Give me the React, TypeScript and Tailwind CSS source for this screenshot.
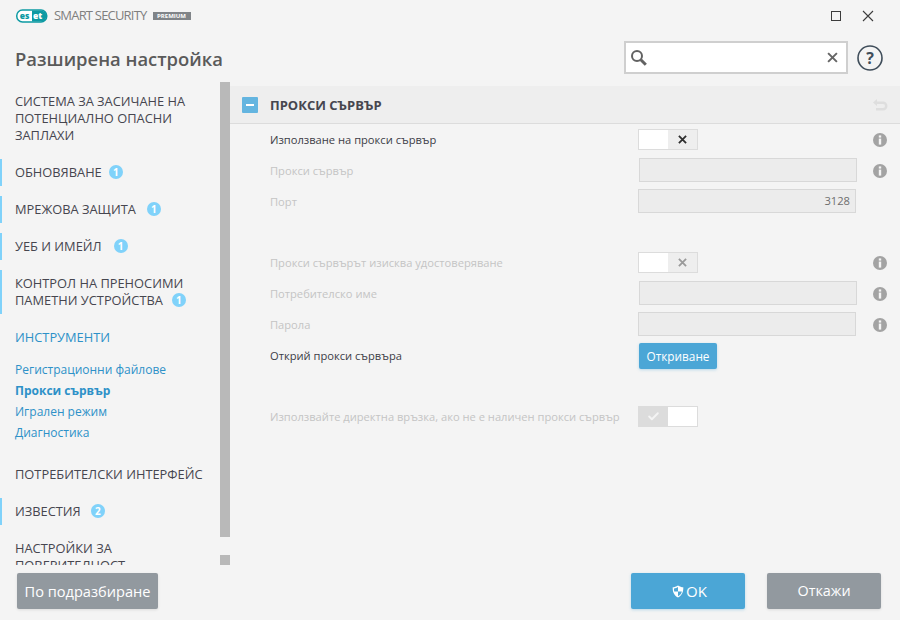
import React from "react";
import { Check } from "lucide-react";

const font = { fontFamily: '"Open Sans", "Noto Sans", sans-serif' };

function Nav({ children, badge, bar = true, gap = "ml-[12px]" }: { children: React.ReactNode; badge?: string; bar?: boolean; gap?: string }) {
  return (
    <div className={`pl-[13px] py-[5px] leading-[17px] text-[12.85px] text-[#46464f] border-l-2 mb-[10px] ${bar ? "border-[#80d2fa]" : "border-transparent"}`}>
      {children}
      {badge && (
        <span className={`inline-flex align-[1px] ${gap} w-[14px] h-[14px] rounded-full bg-[#80d2fa] text-white text-[10px] font-bold leading-none items-center justify-center`}>
          {badge}
        </span>
      )}
    </div>
  );
}

function Info() {
  return (
    <svg width="14" height="14" viewBox="0 0 14 14" className="shrink-0">
      <circle cx="7" cy="7" r="7" fill="#a3a3a3" />
      <rect x="5.8" y="2.4" width="2.4" height="2.2" fill="#f4f4f4" />
      <rect x="5.8" y="5.6" width="2.4" height="6" fill="#f4f4f4" />
    </svg>
  );
}

function Cross({ color, size = 9, width = 2 }: { color: string; size?: number; width?: number }) {
  return (
    <svg width={size} height={size} viewBox="0 0 10 10">
      <path d="M1 1l8 8M9 1L1 9" stroke={color} strokeWidth={width} fill="none" />
    </svg>
  );
}

function Row({ label, dim, info, children }: { label: string; dim?: boolean; info?: boolean; children?: React.ReactNode }) {
  return (
    <div className="h-[31px] flex items-center">
      <div className={`w-[408px] pl-[40px] pt-[2px] text-[11.15px] whitespace-nowrap ${dim ? "text-[#c4c4c4]" : "text-[#3c3c46]"}`}>{label}</div>
      <div className="w-[234px] flex">{children}</div>
      <div className="ml-[1px] w-[14px]">{info && <Info />}</div>
    </div>
  );
}

function Toggle({ dim }: { dim?: boolean }) {
  return (
    <div className="w-[60px] h-[21px] border border-[#dcdcdc] flex bg-[#eeeeee]">
      <div className="w-[29px] bg-white" />
      <div className="flex-1 flex items-center justify-center">
        <Cross color={dim ? "#9a9a9a" : "#2e2e2e"} />
      </div>
    </div>
  );
}

function Field({ value, offset }: { value?: string; offset?: boolean }) {
  return (
    <div className={`h-[24px] mb-[1px] bg-[#ececec] border border-[#d8d8d8] text-right pr-[5px] text-[11.2px] leading-[22px] text-[#6e6e6e] ${offset ? "ml-[1px] w-[218px]" : "w-[218px]"}`}>
      {value}
    </div>
  );
}

export default function App() {
  return (
    <div className="w-[900px] h-[620px] bg-[#f4f4f4] overflow-hidden flex flex-col" style={font}>
      {/* title bar */}
      <div className="h-[32px] flex items-center pl-[16px] pr-[26px]">
        <svg width="32" height="14" viewBox="0 0 32 14" className="shrink-0">
          <rect x="0.75" y="1" width="30" height="12" rx="5.7" fill="#fff" stroke="#0d9aa3" strokeWidth="1.5" />
          <path d="M16 1.500h9a5.500 5.500 0 0 1 0 11h-9z" fill="#0d9aa3" />
          <text x="3.800" y="10" fontSize="8.500" fontWeight="800" fill="#0d9aa3" fontFamily="Open Sans">es</text>
          <text x="17" y="10" fontSize="8.500" fontWeight="800" fill="#fff" fontFamily="Open Sans">et</text>
        </svg>
        <span className="ml-[6px] text-[13px] tracking-[-0.8px] text-[#7f7f7f]">SMART SECURITY</span>
        <span className="ml-[6px] h-[8px] w-[38px] bg-[#808488] text-white text-[6px] font-bold leading-[8px] text-center">PREMIUM</span>
        <div className="flex-1" />
        <div className="w-[10px] h-[10px] border border-[#3c3c3c]" />
        <svg width="12" height="12" viewBox="0 0 12 12" className="ml-[21px]">
          <path d="M1 1l10 10M11 1L1 11" stroke="#3c3c3c" strokeWidth="1.1" />
        </svg>
      </div>

      {/* heading */}
      <div className="h-[50px] flex items-center pl-[15px] pr-[16px]">
        <div className="text-[18.4px] font-semibold text-[#5a5a5a] flex-1 mt-[4px]">Разширена настройка</div>
        <div className="w-[224px] h-[33px] mt-[1px] border-2 border-[#cfcfcf] bg-white flex items-center pl-[4px] pr-[8px]">
          <svg width="18" height="18" viewBox="0 0 18 18">
            <circle cx="7" cy="7" r="5" fill="none" stroke="#626262" strokeWidth="2" />
            <path d="M10.800 10.800l5 5" stroke="#626262" strokeWidth="3" />
          </svg>
          <div className="flex-1" />
          <Cross color="#666666" size={11} width={1.800} />
        </div>
        <svg width="28" height="28" viewBox="0 0 28 28" className="ml-[8px] mt-[1px]">
          <circle cx="14" cy="14" r="12" fill="none" stroke="#3f4d5a" strokeWidth="1.600" />
          <text x="14" y="19.500" textAnchor="middle" fontSize="16" fontWeight="700" fill="#3f4d5a" fontFamily="Open Sans">?</text>
        </svg>
      </div>

      {/* body */}
      <div className="flex h-[483px]">
        <div className="w-[220px] overflow-hidden pt-[6px]">
          <Nav bar={false}>СИСТЕМА ЗА ЗАСИЧАНЕ НА ПОТЕНЦИАЛНО ОПАСНИ ЗАПЛАХИ</Nav>
          <Nav badge="1" gap="ml-[7px]">ОБНОВЯВАНЕ</Nav>
          <Nav badge="1" gap="ml-[11px]">МРЕЖОВА ЗАЩИТА</Nav>
          <Nav badge="1">УЕБ И ИМЕЙЛ</Nav>
          <Nav badge="1" gap="ml-[9px]">КОНТРОЛ НА ПРЕНОСИМИ ПАМЕТНИ УСТРОЙСТВА</Nav>
          <div className="pl-[15px] py-[5px] leading-[17px] text-[12.85px] text-[#2d91c8]">ИНСТРУМЕНТИ</div>
          <div className="mt-[8px] mb-[18px] pl-[15px] text-[12px] leading-[21px] text-[#2d91c8]">
            <div>Регистрационни файлове</div>
            <div className="font-bold">Прокси сървър</div>
            <div>Игрален режим</div>
            <div>Диагностика</div>
          </div>
          <Nav bar={false}>ПОТРЕБИТЕЛСКИ ИНТЕРФЕЙС</Nav>
          <Nav badge="2" gap="ml-[10px]">ИЗВЕСТИЯ</Nav>
          <Nav bar={false}>НАСТРОЙКИ ЗА ПОВЕРИТЕЛНОСТ</Nav>
        </div>

        <div className="w-[10px] flex flex-col">
          <div className="h-[455px] bg-[#b9b9b9]" />
          <div className="flex-1" />
          <div className="h-[10px] bg-[#b9b9b9]" />
        </div>

        <div className="flex-1 pt-[4px]">
          <div className="h-[38px] bg-[#eeeeee] border-b border-[#dcdcdc] flex items-center pl-[12px] pr-[12px]">
            <div className="w-[16px] h-[16px] rounded-[1px] bg-[#64b5e0] flex items-center justify-center">
              <div className="w-[8px] h-[2px] bg-white" />
            </div>
            <div className="ml-[12px] pt-[2px] text-[13px] font-bold text-[#46464f] flex-1">ПРОКСИ СЪРВЪР</div>
            <svg width="16" height="14" viewBox="0 0 16 14">
              <path d="M5 1L1 4.500 5 8V6h6a2 2 0 0 1 0 4H4v2.500h7a4.500 4.500 0 0 0 0-9H5z" fill="#dedede" />
            </svg>
          </div>
          <div>
            <Row label="Използване на прокси сървър" info>
              <Toggle />
            </Row>
            <Row label="Прокси сървър" dim info>
              <Field offset />
            </Row>
            <Row label="Порт" dim>
              <Field value="3128" />
            </Row>
            <div className="h-[30px]" />
            <Row label="Прокси сървърът изисква удостоверяване" dim info>
              <Toggle dim />
            </Row>
            <Row label="Потребителско име" dim info>
              <Field offset />
            </Row>
            <Row label="Парола" dim info>
              <Field />
            </Row>
            <Row label="Открий прокси сървъра">
              <div className="ml-[1px] w-[78px] h-[26px] rounded-[2px] bg-[#4ba6d6] text-white text-[11.800px] leading-[26px] text-center shadow-[0_1px_3px_rgba(75,166,214,0.35)]">
                Откриване
              </div>
            </Row>
            <div className="h-[30px]" />
            <Row label="Използвайте директна връзка, ако не е наличен прокси сървър" dim>
              <div className="w-[60px] h-[21px] border border-[#dcdcdc] flex bg-white">
                <div className="w-[29px] bg-[#dcdcdc] flex items-center justify-center">
                  <Check size={13} strokeWidth={3.500} className="text-[#f4f4f4]" />
                </div>
              </div>
            </Row>
          </div>
        </div>
      </div>

      {/* footer */}
      <div className="flex-1 flex items-start pt-[8px] pl-[17px] pr-[19px]">
        <div className="w-[141px] h-[36px] rounded-[2px] bg-[#92999f] text-white text-[14.600px] leading-[36px] text-center shadow-[0_1px_3px_rgba(0,0,0,0.1)]">
          По подразбиране
        </div>
        <div className="flex-1" />
        <div className="w-[114px] h-[36px] pl-[3px] rounded-[2px] bg-[#4ba6d6] text-white text-[15px] flex items-center justify-center gap-[2px] shadow-[0_1px_3px_rgba(75,166,214,0.35)]">
          <svg width="12" height="13" viewBox="0 0 12 13">
            <path d="M6 .5C8 1.800 9.500 2.200 11.300 2.300 11.500 7 10 10.500 6 12.500 2 10.500.5 7 .7 2.300 2.500 2.200 4 1.800 6 .5z" fill="#fff" />
            <path d="M6 2v4.500h3.800c-.3 2-1.500 3.700-3.800 4.800V6.500H2.200C2 5.500 2 4.500 2 3.500 3.500 3.300 4.800 2.800 6 2z" fill="#4ba6d6" />
          </svg>
          OK
        </div>
        <div className="ml-[22px] w-[114px] h-[36px] rounded-[2px] bg-[#92999f] text-white text-[14.400px] leading-[36px] text-center shadow-[0_1px_3px_rgba(0,0,0,0.1)]">
          Откажи
        </div>
      </div>
    </div>
  );
}
